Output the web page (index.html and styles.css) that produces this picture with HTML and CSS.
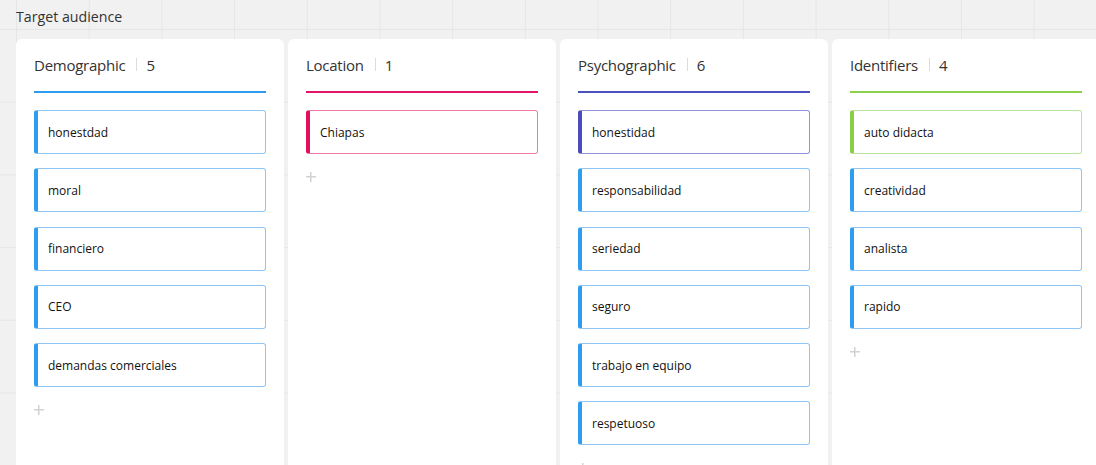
FILE: index.html
```html
<!DOCTYPE html>
<html>
<head>
<meta charset="utf-8">
<link rel="stylesheet" href="styles.css">
</head>
<body>
<div class="page">
  <div class="title">Target audience</div>
  <div class="board">
    <section class="col col-blue">
      <header class="col-head"><span class="col-name">Demographic</span><span class="sep"></span><span class="col-count">5</span></header>
      <div class="items">
        <div class="item">honestdad</div>
        <div class="item">moral</div>
        <div class="item">financiero</div>
        <div class="item">CEO</div>
        <div class="item">demandas comerciales</div>
      </div>
      <div class="add"></div>
    </section>
    <section class="col col-pink">
      <header class="col-head"><span class="col-name">Location</span><span class="sep"></span><span class="col-count">1</span></header>
      <div class="items">
        <div class="item item-pink">Chiapas</div>
      </div>
      <div class="add"></div>
    </section>
    <section class="col col-indigo">
      <header class="col-head"><span class="col-name">Psychographic</span><span class="sep"></span><span class="col-count">6</span></header>
      <div class="items">
        <div class="item item-indigo">honestidad</div>
        <div class="item">responsabilidad</div>
        <div class="item">seriedad</div>
        <div class="item">seguro</div>
        <div class="item">trabajo en equipo</div>
        <div class="item">respetuoso</div>
      </div>
      <div class="add"></div>
    </section>
    <section class="col col-green">
      <header class="col-head"><span class="col-name">Identifiers</span><span class="sep"></span><span class="col-count">4</span></header>
      <div class="items">
        <div class="item item-green">auto didacta</div>
        <div class="item">creatividad</div>
        <div class="item">analista</div>
        <div class="item">rapido</div>
      </div>
      <div class="add"></div>
    </section>
  </div>
</div>
</body>
</html>
```

FILE: styles.css
```css
html, body {
  margin: 0;
  padding: 0;
  height: 100%;
  overflow: hidden;
}
body {
  font-family: "Open Sans", "DejaVu Sans", sans-serif;
  color: #222;
  background-color: #f1f1f1;
  background-image:
    linear-gradient(to right, #e6e6e6 1px, transparent 1px),
    linear-gradient(to bottom, #e6e6e6 1px, transparent 1px);
  background-size: 72.7px 72.7px;
  background-position: 16px 29px;
}
.page {
  padding: 0 0 0 16px;
}
.title {
  height: 39px;
  font-size: 14.2px;
  line-height: 34px;
  color: #333;
}
.board {
  display: flex;
  gap: 4px;
}
.col {
  flex: 0 0 268px;
  min-height: 440px;
  background: #fff;
  border-radius: 6px;
  padding: 13px 18px 0;
  box-sizing: border-box;
}
.col-head {
  display: flex;
  align-items: center;
  height: 25px;
  padding-bottom: 14px;
  border-bottom: 2px solid #2e9df1;
  font-size: 15px;
  letter-spacing: -0.25px;
  color: #333;
}
.col-pink .col-head { border-bottom-color: #e2146a; }
.col-indigo .col-head { border-bottom-color: #4c50bf; }
.col-green .col-head { border-bottom-color: #8bd14c; }
.sep {
  width: 1px;
  height: 13px;
  background: #dcdcdc;
  margin: 0 9px 0 11px;
}
.items {
  display: flex;
  flex-direction: column;
  gap: 14.25px;
  margin-top: 17px;
}
.item {
  height: 44px;
  box-sizing: border-box;
  border: 1px solid #8ec7f6;
  border-left: 4px solid #2e9df1;
  border-radius: 3px;
  padding-left: 10px;
  display: flex;
  align-items: center;
  font-size: 12px;
  color: #111;
}
.item-pink { border-color: #f07aa8; border-left-color: #e0105f; }
.item-indigo { border-color: #9293dc; border-left-color: #4a4db9; }
.item-green { border-color: #b9e59c; border-left-color: #88cf48; }
.add {
  margin-top: 18px;
  width: 10px;
  height: 10px;
  background:
    linear-gradient(#d2d2d2, #d2d2d2) center / 10px 1.5px no-repeat,
    linear-gradient(#d2d2d2, #d2d2d2) center / 1.5px 10px no-repeat;
}
```
